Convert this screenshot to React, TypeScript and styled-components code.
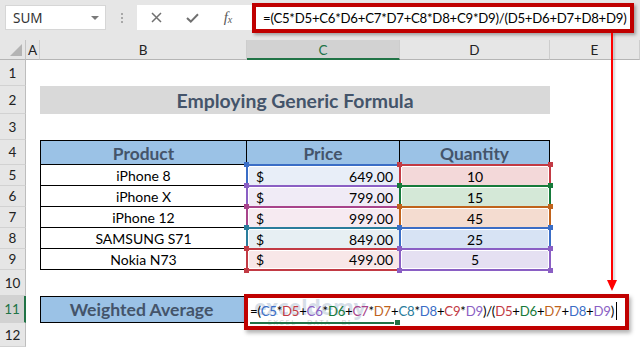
import React from 'react';
import styled, { createGlobalStyle } from 'styled-components';

const CAL = `'Lato', 'Liberation Sans', sans-serif`;
const UI = `'Noto Sans', 'Open Sans', sans-serif`;

const GlobalStyle = createGlobalStyle`
  html, body { margin: 0; padding: 0; background: #fff; }
  body { width: 640px; height: 347px; overflow: hidden; }
`;

const Frame = styled.div`
  position: relative;
  width: 640px;
  height: 347px;
  overflow: hidden;
  background: #fff;
  font-family: ${CAL};
`;

/* ---------- formula bar ---------- */
const FormulaBar = styled.div`
  height: 40px;
  box-sizing: border-box;
  background: #e6e6e6;
  display: flex;
  align-items: flex-start;
  padding: 5px 6px 0 5px;
`;

const NameBox = styled.div`
  flex: 0 0 101px;
  height: 25px;
  box-sizing: border-box;
  background: #fff;
  border: 1px solid #d6d6d6;
  display: flex;
  align-items: center;
  justify-content: space-between;
  padding: 0 6px 0 7px;
  font-family: ${UI};
  font-size: 13.5px;
  color: #333;
`;

const Caret = styled.span`
  width: 0;
  height: 0;
  border-left: 4px solid transparent;
  border-right: 4px solid transparent;
  border-top: 4px solid #7a7a7a;
`;

const Grip = styled.div`
  flex: 0 0 31px;
  height: 25px;
  display: flex;
  flex-direction: column;
  align-items: center;
  justify-content: center;
  gap: 2px;
`;

const GripDot = styled.span`
  width: 2px;
  height: 2px;
  background: #a8a8a8;
`;

const FxGroup = styled.div`
  flex: 0 0 115px;
  height: 25px;
  background: #fff;
  display: flex;
  align-items: center;
  padding-left: 1px;
  box-sizing: border-box;
`;

const FxButton = styled.div`
  width: 36px;
  height: 25px;
  display: flex;
  align-items: center;
  justify-content: center;
  color: #6e6e6e;
`;

const FxLabel = styled.span`
  font-family: 'Liberation Serif', serif;
  font-style: italic;
  font-size: 15px;
  color: #5a5a5a;
  sub {
    font-size: 10px;
    vertical-align: -1px;
  }
`;

const FormulaInput = styled.div`
  flex: 1 1 auto;
  min-width: 0;
  overflow: hidden;
  height: 30px;
  margin-top: -2px;
  box-sizing: border-box;
  border: 4px solid #c00000;
  background: #fff;
  box-shadow: 2px 2px 3px rgba(0, 0, 0, 0.3);
  display: flex;
  align-items: center;
  padding-left: 7px;
  font-size: 13.2px;
  letter-spacing: -0.25px;
  color: #000;
  white-space: nowrap;
`;

/* ---------- sheet ---------- */
const Sheet = styled.div`
  display: grid;
  grid-template-columns: 26px 14px 207px 153px 150px 90px;
  grid-template-rows: 20px 26px 28px 26px 25px repeat(5, 21px) 26px 27px 24px;
`;

const Corner = styled.div`
  grid-row: 1;
  grid-column: 1;
  background: #e6e6e6;
  border-right: 1px solid #c4c4c4;
  border-bottom: 1px solid #b5b5b5;
  display: flex;
  align-items: flex-end;
  justify-content: flex-end;
  padding: 0 3px 3px 0;
`;

const ColHeader = styled.div<{ $col: string; $active?: boolean }>`
  grid-row: 1;
  grid-column: ${(p) => p.$col};
  background: ${(p) => (p.$active ? '#d2d2d2' : '#e6e6e6')};
  border-right: 1px solid #cdcdcd;
  border-bottom: ${(p) => (p.$active ? '2px solid #217346' : '1px solid #b5b5b5')};
  color: ${(p) => (p.$active ? '#217346' : '#222')};
  display: flex;
  align-items: center;
  justify-content: center;
  font-size: 13.5px;
  padding-top: ${(p) => (p.$active ? '1px' : '0')};
`;

const RowHeader = styled.div<{ $row: number; $active?: boolean }>`
  grid-row: ${(p) => p.$row + 1};
  grid-column: 1;
  background: ${(p) => (p.$active ? '#d2d2d2' : '#e6e6e6')};
  border-right: ${(p) => (p.$active ? '2px solid #217346' : '1px solid #bdbdbd')};
  border-bottom: 1px solid #d2d2d2;
  color: ${(p) => (p.$active ? '#217346' : '#222')};
  display: flex;
  align-items: center;
  justify-content: center;
  font-size: 13.5px;
`;

const Title = styled.div`
  grid-row: 3;
  grid-column: 3 / 6;
  background: #d9d9d9;
  color: #44546a;
  font-weight: 700;
  font-size: 19.4px;
  display: flex;
  align-items: center;
  justify-content: center;
`;

const HeadCell = styled.div<{ $col: number; $first?: boolean }>`
  grid-row: 5;
  grid-column: ${(p) => p.$col};
  background: #9bc2e6;
  color: #44546a;
  font-weight: 700;
  font-size: 17.4px;
  border-top: 1px solid #000;
  border-right: 1px solid #000;
  border-bottom: 1px solid #000;
  border-left: ${(p) => (p.$first ? '1px solid #000' : 'none')};
  display: flex;
  align-items: center;
  justify-content: center;
  padding-top: 1px;
`;

const NameCell = styled.div<{ $row: number }>`
  grid-row: ${(p) => p.$row + 1};
  grid-column: 3;
  border-left: 1px solid #000;
  border-right: 1px solid #000;
  border-bottom: 1px solid #000;
  display: flex;
  align-items: center;
  justify-content: center;
  font-size: 14px;
  color: #000;
`;

const RefCell = styled.div<{
  $row: number;
  $col: number;
  $c: string;
  $fill: string;
  $last?: boolean;
  $right?: boolean;
}>`
  position: relative;
  grid-row: ${(p) => p.$row + 1};
  grid-column: ${(p) => p.$col};
  margin: -1px ${(p) => (p.$right ? '-1px' : '0')} ${(p) => (p.$last ? '-1px' : '0')} -1px;
  border-style: solid;
  border-color: ${(p) => p.$c};
  border-width: 2px ${(p) => (p.$right ? '2px' : '0')} ${(p) => (p.$last ? '2px' : '0')} 2px;
  background: ${(p) => p.$fill};
  box-shadow: inset 0 0 0 1px #fff;
  display: flex;
  align-items: center;
  justify-content: ${(p) => (p.$right ? 'center' : 'space-between')};
  padding: ${(p) => (p.$right ? '0' : '0 7px 0 8px')};
  font-size: 14px;
  color: #000;
`;

const Handle = styled.span<{ $c: string; $v: 'top' | 'bottom'; $h: 'left' | 'right' }>`
  position: absolute;
  z-index: 2;
  width: 5px;
  height: 5px;
  background: ${(p) => p.$c};
  ${(p) => p.$v}: -4px;
  ${(p) => p.$h}: -4px;
`;

const WeightCell = styled.div`
  grid-row: 12;
  grid-column: 3;
  background: #9bc2e6;
  border: 1px solid #000;
  color: #44546a;
  font-weight: 700;
  font-size: 17.6px;
  display: flex;
  align-items: center;
  justify-content: center;
  padding-right: 4px;
`;

const EditCell = styled.div`
  position: relative;
  z-index: 3;
  grid-row: 12;
  grid-column: 4 / 7;
  margin: -2px 11px -7px -3px;
  border: 4px solid #c00000;
  background: #fff;
  box-shadow: 2px 3px 4px rgba(0, 0, 0, 0.3);
  display: flex;
  align-items: center;
  padding: 0 0 2px 2px;
  font-size: 13.2px;
  letter-spacing: -0.25px;
  white-space: nowrap;
  color: #000;
`;

const Tok = styled.span<{ $c?: string }>`
  position: relative;
  z-index: 1;
  color: ${(p) => p.$c || '#000'};
`;

const Cursor = styled.span`
  display: inline-block;
  width: 1px;
  height: 18px;
  margin-left: 2px;
  background: #000;
`;

const Watermark = styled.div`
  position: absolute;
  left: 6px;
  top: -2px;
  display: flex;
  flex-direction: column;
  align-items: center;
  opacity: 0.22;
  pointer-events: none;
`;

const WaterLogo = styled.span`
  font-family: ${UI};
  font-size: 21px;
  font-weight: 700;
  letter-spacing: 0;
  color: #4a6e9a;
  line-height: 22px;
`;

const WaterTag = styled.span`
  font-family: ${UI};
  font-size: 7.5px;
  letter-spacing: 1.5px;
  color: #333;
  line-height: 9px;
`;

const SelLine = styled.span`
  position: absolute;
  left: 2px;
  top: 24px;
  width: 145px;
  height: 2px;
  background: #217346;
`;

const SelHandle = styled.span`
  position: absolute;
  left: 147px;
  top: 22px;
  width: 5px;
  height: 5px;
  background: #217346;
  border: 1px solid #fff;
  box-sizing: content-box;
  margin: -1px 0 0 -1px;
`;

/* ---------- annotation arrow ---------- */
const ArrowLine = styled.div`
  position: absolute;
  left: 611px;
  top: 33px;
  width: 2px;
  height: 250px;
  background: #ff0000;
  box-shadow: 2px 1px 2px rgba(0, 0, 0, 0.18);
  z-index: 5;
`;

const ArrowHead = styled.svg`
  position: absolute;
  left: 607px;
  top: 280px;
  z-index: 5;
`;

const BLUE = '#3a6dc6';
const RED = '#c23a44';
const PURPLE = '#8a5fc4';
const GREEN = '#167a3a';
const MAG = '#a8448b';
const ORANGE = '#c0631c';
const TEAL = '#2a7d9c';

const rows = [
  { name: 'iPhone 8', price: '649.00', qty: '10', c: [BLUE, '#e8eef8'], d: [RED, '#f3d8d9'] },
  { name: 'iPhone X', price: '799.00', qty: '15', c: [PURPLE, '#f0ebf6'], d: [GREEN, '#d4e8d7'] },
  { name: 'iPhone 12', price: '999.00', qty: '45', c: [MAG, '#f6eaf1'], d: [ORANGE, '#f4dcd0'] },
  { name: 'SAMSUNG S71', price: '849.00', qty: '25', c: [TEAL, '#e7eff3'], d: [BLUE, '#d7e3f4'] },
  { name: 'Nokia N73', price: '499.00', qty: '5', c: [RED, '#f8e7e8'], d: [PURPLE, '#e5e0f2'] },
];

const tokens: [string, string?][] = [
  ['=('], ['C5', BLUE], ['*'], ['D5', RED], ['+'], ['C6', PURPLE], ['*'], ['D6', GREEN], ['+'],
  ['C7', MAG], ['*'], ['D7', ORANGE], ['+'], ['C8', TEAL], ['*'], ['D8', BLUE], ['+'],
  ['C9', RED], ['*'], ['D9', PURPLE], [')/('], ['D5', RED], ['+'], ['D6', GREEN], ['+'],
  ['D7', ORANGE], ['+'], ['D8', BLUE], ['+'], ['D9', PURPLE], [')'],
];

const FORMULA = '=(C5*D5+C6*D6+C7*D7+C8*D8+C9*D9)/(D5+D6+D7+D8+D9)';

export default function App() {
  return (
    <>
      <GlobalStyle />
      <Frame>
        <FormulaBar>
          <NameBox>
            SUM
            <Caret />
          </NameBox>
          <Grip>
            <GripDot />
            <GripDot />
            <GripDot />
          </Grip>
          <FxGroup>
            <FxButton>
              <svg width="11" height="11" viewBox="0 0 11 11">
                <path d="M1 1 L10 10 M10 1 L1 10" stroke="#707070" strokeWidth="1.5" fill="none" />
              </svg>
            </FxButton>
            <FxButton>
              <svg width="13" height="10" viewBox="0 0 13 10">
                <path d="M1 5 L4.8 8.6 L12 1.2" stroke="#707070" strokeWidth="2" fill="none" />
              </svg>
            </FxButton>
            <FxButton>
              <FxLabel>
                f<sub>x</sub>
              </FxLabel>
            </FxButton>
          </FxGroup>
          <FormulaInput>{FORMULA}</FormulaInput>
        </FormulaBar>

        <Sheet>
          <Corner>
            <svg width="12" height="12" viewBox="0 0 12 12">
              <polygon points="12,0 12,12 0,12" fill="#b4b4b4" />
            </svg>
          </Corner>
          <ColHeader $col="2">A</ColHeader>
          <ColHeader $col="3">B</ColHeader>
          <ColHeader $col="4" $active>
            C
          </ColHeader>
          <ColHeader $col="5">D</ColHeader>
          <ColHeader $col="6">E</ColHeader>

          {Array.from({ length: 12 }, (_, i) => (
            <RowHeader key={i} $row={i + 1} $active={i + 1 === 11}>
              {i + 1}
            </RowHeader>
          ))}

          <Title>Employing Generic Formula</Title>

          <HeadCell $col={3} $first>
            Product
          </HeadCell>
          <HeadCell $col={4}>Price</HeadCell>
          <HeadCell $col={5}>Quantity</HeadCell>

          {rows.map((r, i) => {
            const row = 5 + i;
            const last = i === rows.length - 1;
            return (
              <React.Fragment key={r.name}>
                <NameCell $row={row}>{r.name}</NameCell>
                <RefCell $row={row} $col={4} $c={r.c[0]} $fill={r.c[1]} $last={last}>
                  <Handle $c={r.c[0]} $v="top" $h="left" />
                  {last && <Handle $c={r.c[0]} $v="bottom" $h="left" />}
                  <span>$</span>
                  <span>{r.price}</span>
                </RefCell>
                <RefCell $row={row} $col={5} $c={r.d[0]} $fill={r.d[1]} $last={last} $right>
                  <Handle $c={r.d[0]} $v="top" $h="left" />
                  <Handle $c={r.d[0]} $v="top" $h="right" />
                  {last && <Handle $c={r.d[0]} $v="bottom" $h="left" />}
                  {last && <Handle $c={r.d[0]} $v="bottom" $h="right" />}
                  {r.qty}
                </RefCell>
              </React.Fragment>
            );
          })}

          <WeightCell>Weighted Average</WeightCell>
          <EditCell>
            <Watermark>
              <WaterLogo>exceldemy</WaterLogo>
              <WaterTag>EXCEL · DATA · BI</WaterTag>
            </Watermark>
            <SelLine />
            <SelHandle />
            {tokens.map(([t, c], i) => (
              <Tok key={i} $c={c}>
                {t}
              </Tok>
            ))}
            <Cursor />
          </EditCell>
        </Sheet>

        <ArrowLine />
        <ArrowHead width="10" height="11" viewBox="0 0 10 11">
          <polygon points="0,0 10,0 5,11" fill="#ff0000" />
        </ArrowHead>
      </Frame>
    </>
  );
}
